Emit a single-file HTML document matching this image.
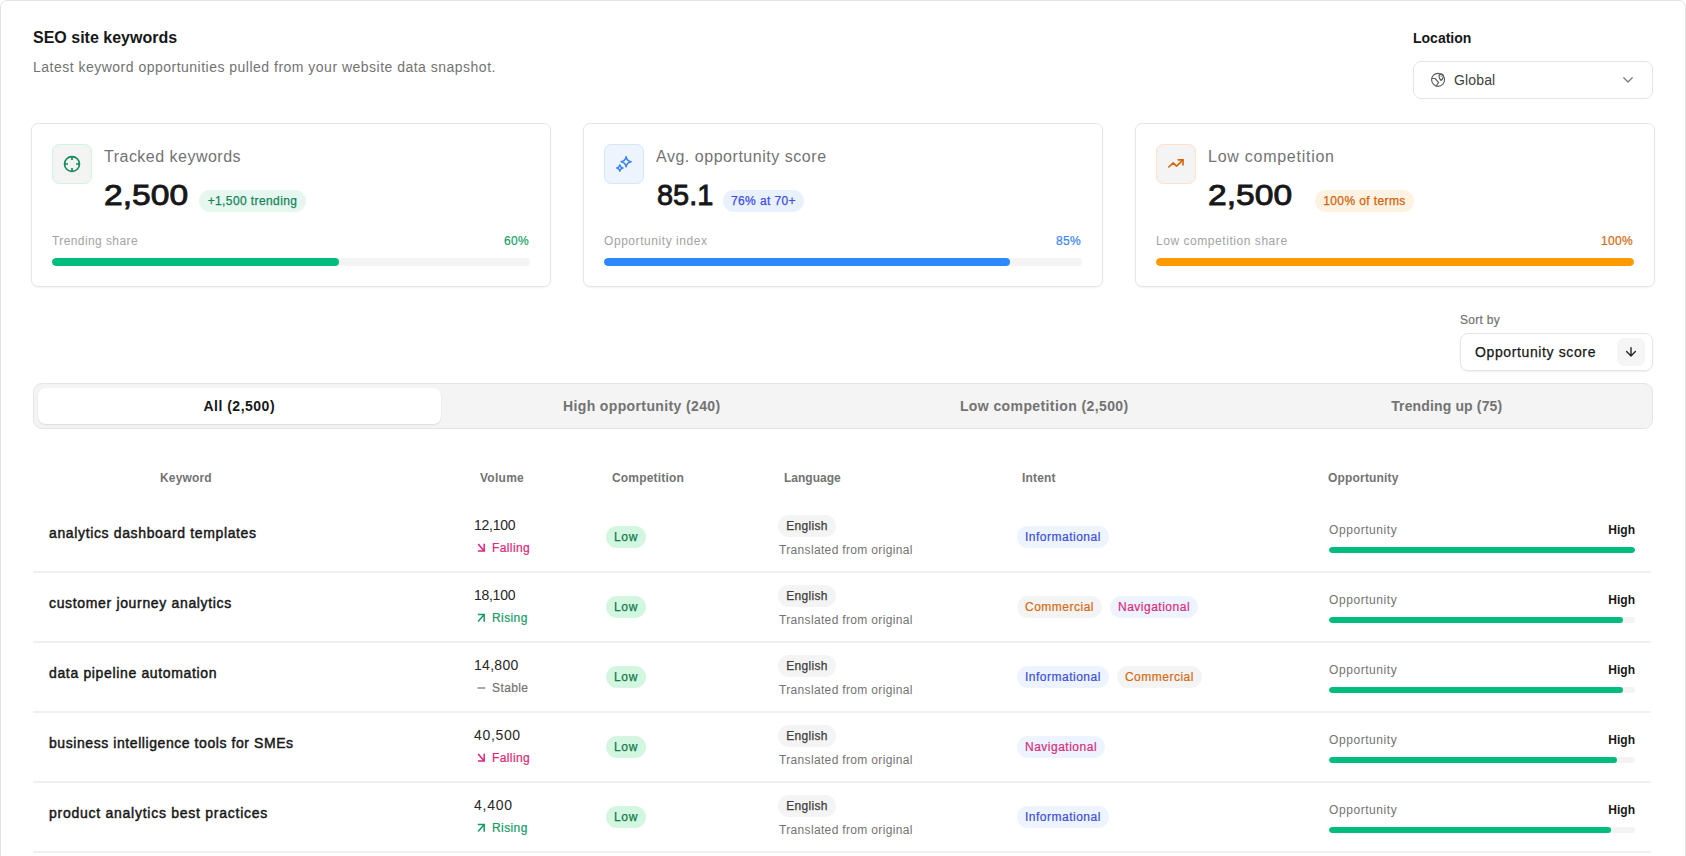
<!DOCTYPE html>
<html><head><meta charset="utf-8"><style>
*{box-sizing:border-box;margin:0;padding:0}
html,body{width:1686px;height:856px;overflow:hidden;background:#fff}
body{font-family:"Liberation Sans",sans-serif;color:#171717;position:relative}
.abs{position:absolute;white-space:nowrap}
.overlay{position:absolute;left:0;top:0;pointer-events:none}
.frame{position:absolute;left:0;top:0;width:1686px;height:900px;border:1px solid #e3e3e3;border-radius:7px}
.title{left:33px;top:28px;font-size:16px;font-weight:700;color:#171717;line-height:20px}
.sub{left:33px;top:58px;font-size:14px;color:#737373;line-height:18px;letter-spacing:.49px}
.loclabel{left:1413px;top:29px;font-size:14px;font-weight:700;line-height:18px}
.select{position:absolute;left:1413px;top:61px;width:240px;height:38px;border:1px solid #e5e5e5;border-radius:8px}
.seltxt{left:40px;top:9px;font-size:14px;line-height:18px;color:#404040;letter-spacing:.15px}
.card{position:absolute;top:123px;width:520px;height:164px;border:1px solid #e5e5e5;border-radius:7px;box-shadow:0 1px 2px rgba(0,0,0,.05)}
.ibox{position:absolute;left:20px;top:20px;width:40px;height:40px;border-radius:7px;border:1px solid}
.clabel{position:absolute;left:72px;top:23px;font-size:16px;color:#737373;line-height:20px;white-space:nowrap}
.cnum{position:absolute;left:72px;top:53px;transform-origin:0 0;font-size:30px;font-weight:400;-webkit-text-stroke:.9px #171717;color:#171717;line-height:36px;white-space:nowrap}
.cbadge{position:absolute;top:66px;height:22px;border-radius:11px;font-size:12px;line-height:22px;text-align:center;white-space:nowrap;letter-spacing:.4px;-webkit-text-stroke:.25px currentColor}
.plabel{position:absolute;left:20px;top:110px;font-size:12px;color:#a3a3a3;line-height:14px;white-space:nowrap}
.pval{position:absolute;right:21px;top:110px;font-size:12px;line-height:14px;letter-spacing:.3px;-webkit-text-stroke:.2px currentColor}
.track{position:absolute;left:20px;top:134px;width:478px;height:8px;border-radius:4px;background:#f4f4f4;overflow:hidden}
.fill{height:8px;border-radius:4px}
.sortlabel{left:1460px;top:313px;font-size:12px;color:#737373;line-height:14px;letter-spacing:.3px;-webkit-text-stroke:.2px currentColor}
.sort{position:absolute;left:1460px;top:333px;width:193px;height:38px;border:1px solid #e5e5e5;border-radius:8px;box-shadow:0 1px 2px rgba(0,0,0,.07)}
.sorttxt{left:14px;top:9px;font-size:14px;line-height:18px;color:#171717;letter-spacing:.62px;-webkit-text-stroke:.25px currentColor}
.sortbtn{position:absolute;left:156px;top:4px;width:28px;height:28px;border-radius:7px;background:#f5f5f5}
.tabs{position:absolute;left:33px;top:383px;width:1620px;height:46px;background:#f4f4f4;border:1px solid #e5e5e5;border-radius:9px}
.tab{position:absolute;top:4px;height:36px;width:402.5px;font-size:14px;line-height:36px;text-align:center;color:#737373;font-weight:700;white-space:nowrap}
.tab.active{background:#fff;border-radius:8px;color:#171717;box-shadow:0 1px 2px rgba(0,0,0,.1)}
.th{position:absolute;top:471px;font-size:12px;font-weight:700;color:#737373;line-height:14px;white-space:nowrap}
.row{position:absolute;left:33px;width:1618px;height:70px;border-bottom:1px solid #f0f0f0;box-shadow:0 1px 0 #f0f0f0}
.kw{position:absolute;left:16px;top:22px;font-size:14px;font-weight:400;-webkit-text-stroke:.45px #171717;color:#171717;line-height:18px;white-space:nowrap}
.vol{position:absolute;left:441px;top:14px;font-size:14px;color:#262626;line-height:18px;letter-spacing:-.2px}
.trend{position:absolute;left:459px;top:39px;font-size:12px;line-height:14px;white-space:nowrap;letter-spacing:.4px;-webkit-text-stroke:.2px currentColor}
.low{position:absolute;left:573px;top:24px;height:22px;width:40px;border-radius:11px;background:#d3f6e0;color:#0f7a4b;-webkit-text-stroke:.25px currentColor;font-size:12px;line-height:22px;text-align:center;letter-spacing:.6px}
.lang{position:absolute;left:745px;top:13px;height:22px;width:58px;border-radius:11px;background:#f4f4f4;color:#404040;font-size:12px;line-height:22px;text-align:center;letter-spacing:.3px;-webkit-text-stroke:.25px currentColor}
.trans{position:absolute;left:746px;top:41px;font-size:12px;color:#737373;line-height:14px;white-space:nowrap;letter-spacing:.34px}
.intent{position:absolute;left:984px;top:24px;height:22px;display:flex;gap:8px}
.ib{height:22px;border-radius:11px;font-size:12px;line-height:22px;padding:0 8px;white-space:nowrap;letter-spacing:.5px;-webkit-text-stroke:.2px currentColor}
.ib.inf{background:#edf3ff;color:#3b4fd8}
.ib.com{background:#f4f4f4;color:#d56a12}
.ib.nav{background:#edf3ff;color:#d92c7c}
.opl{position:absolute;left:1296px;top:21px;font-size:12px;color:#737373;line-height:14px;letter-spacing:.57px}
.oph{position:absolute;right:16px;top:21px;font-size:12px;font-weight:700;color:#171717;line-height:14px}
.optrack{position:absolute;left:1296px;top:45px;width:306px;height:6px;border-radius:3px;background:#f3f3f3;overflow:hidden}
.optrack div{height:6px;border-radius:3px;background:#00bc7d}

</style></head><body>
<div class="frame"></div>
<div class="abs title">SEO site keywords</div>
<div class="abs sub">Latest keyword opportunities pulled from your website data snapshot.</div>
<div class="abs loclabel">Location</div>
<div class="select"><div class="abs seltxt">Global</div></div>
<div class="card" style="left:31px"><div class="ibox" style="background:#f4f4f4;border-color:#d0f5df"></div><div class="clabel" style="letter-spacing:0.49px">Tracked keywords</div><div class="cnum" style="transform:scaleX(1.12);left:72px">2,500</div><div class="cbadge" style="left:167px;width:107px;background:#e6f7ef;color:#15845a">+1,500 trending</div><div class="plabel" style="letter-spacing:0.41px">Trending share</div><div class="pval" style="color:#17a068">60%</div><div class="track"><div class="fill" style="width:287px;background:#00bc7d"></div></div></div>
<div class="card" style="left:583px"><div class="ibox" style="background:#eef4fe;border-color:#d5e5fc"></div><div class="clabel" style="letter-spacing:0.53px">Avg. opportunity score</div><div class="cnum" style="transform:scaleX(0.965);left:73px">85.1</div><div class="cbadge" style="left:139px;width:81px;background:#eaf1fe;color:#3d4fdf">76% at 70+</div><div class="plabel" style="letter-spacing:0.56px">Opportunity index</div><div class="pval" style="color:#3a84f2">85%</div><div class="track"><div class="fill" style="width:406px;background:#2d88fa"></div></div></div>
<div class="card" style="left:1135px"><div class="ibox" style="background:#f4f4f4;border-color:#fde3c6"></div><div class="clabel" style="letter-spacing:0.74px">Low competition</div><div class="cnum" style="transform:scaleX(1.12);left:72px">2,500</div><div class="cbadge" style="left:179px;width:99px;background:#fef2e2;color:#d0640c">100% of terms</div><div class="plabel" style="letter-spacing:0.55px">Low competition share</div><div class="pval" style="color:#d3680c">100%</div><div class="track"><div class="fill" style="width:478px;background:#fe9a00"></div></div></div>
<div class="abs sortlabel">Sort by</div>
<div class="sort"><div class="abs sorttxt">Opportunity score</div><div class="sortbtn"></div></div>
<div class="tabs"><div class="tab active" style="left:4px;letter-spacing:.5px">All (2,500)</div><div class="tab" style="left:406.5px;letter-spacing:.37px">High opportunity (240)</div><div class="tab" style="left:809px;letter-spacing:.4px">Low competition (2,500)</div><div class="tab" style="left:1211.5px;letter-spacing:.14px">Trending up (75)</div></div>
<div class="th" style="left:160px;letter-spacing:0.17px">Keyword</div>
<div class="th" style="left:480px;letter-spacing:0.26px">Volume</div>
<div class="th" style="left:612px;letter-spacing:0.18px">Competition</div>
<div class="th" style="left:784px;letter-spacing:0px">Language</div>
<div class="th" style="left:1022px;letter-spacing:0.16px">Intent</div>
<div class="th" style="left:1328px;letter-spacing:0.18px">Opportunity</div>
<div class="row" style="top:502px"><div class="kw" style="letter-spacing:0.64px">analytics dashboard templates</div><div class="vol" style="letter-spacing:-0.24px">12,100</div><div class="trend" style="color:#e0267a">Falling</div><div class="low">Low</div><div class="lang">English</div><div class="trans">Translated from original</div><div class="intent"><div class="ib inf">Informational</div></div><div class="opl">Opportunity</div><div class="oph">High</div><div class="optrack"><div style="width:306px"></div></div></div>
<div class="row" style="top:572px"><div class="kw" style="letter-spacing:0.66px">customer journey analytics</div><div class="vol" style="letter-spacing:-0.28px">18,100</div><div class="trend" style="color:#179a63">Rising</div><div class="low">Low</div><div class="lang">English</div><div class="trans">Translated from original</div><div class="intent"><div class="ib com">Commercial</div><div class="ib nav">Navigational</div></div><div class="opl">Opportunity</div><div class="oph">High</div><div class="optrack"><div style="width:294px"></div></div></div>
<div class="row" style="top:642px"><div class="kw" style="letter-spacing:0.65px">data pipeline automation</div><div class="vol" style="letter-spacing:0.3px">14,800</div><div class="trend" style="color:#737373">Stable</div><div class="low">Low</div><div class="lang">English</div><div class="trans">Translated from original</div><div class="intent"><div class="ib inf">Informational</div><div class="ib com">Commercial</div></div><div class="opl">Opportunity</div><div class="oph">High</div><div class="optrack"><div style="width:294px"></div></div></div>
<div class="row" style="top:712px"><div class="kw" style="letter-spacing:0.57px">business intelligence tools for SMEs</div><div class="vol" style="letter-spacing:0.66px">40,500</div><div class="trend" style="color:#e0267a">Falling</div><div class="low">Low</div><div class="lang">English</div><div class="trans">Translated from original</div><div class="intent"><div class="ib nav">Navigational</div></div><div class="opl">Opportunity</div><div class="oph">High</div><div class="optrack"><div style="width:288px"></div></div></div>
<div class="row" style="top:782px"><div class="kw" style="letter-spacing:0.74px">product analytics best practices</div><div class="vol" style="letter-spacing:0.78px">4,400</div><div class="trend" style="color:#179a63">Rising</div><div class="low">Low</div><div class="lang">English</div><div class="trans">Translated from original</div><div class="intent"><div class="ib inf">Informational</div></div><div class="opl">Opportunity</div><div class="oph">High</div><div class="optrack"><div style="width:282px"></div></div></div>
<svg class="overlay" width="1686" height="856" viewBox="0 0 1686 856"><g fill="none" stroke="#5e5e5e" stroke-width="1.15" stroke-linecap="round" stroke-linejoin="round"><circle cx="1438.1" cy="79.8" r="6.5"/><path d="M1441.2,80.5 C1439.8,79.1 1439,78 1439,76.3 A2.2,2.2 0 0 1 1443.4,76.3 C1443.4,78 1442.6,79.1 1441.2,80.5Z"/><path d="M1431.8,78.5 H1435 L1438.6,82.4 L1436.8,85 L1436.1,86.2"/></g><circle cx="1441.2" cy="76.2" r=".6" fill="#5e5e5e"/><path d="M1623.8,77.8 L1628,82 L1632.2,77.8" fill="none" stroke="#7a7a7a" stroke-width="1.3" stroke-linecap="round" stroke-linejoin="round"/><g fill="none" stroke="#168a5b" stroke-width="1.7" stroke-linecap="butt"><circle cx="72" cy="164" r="7.45"/><path d="M72,156.5 V160 M72,168 V171.5 M64.5,164 H68 M76,164 H79.5"/></g><g fill="none" stroke="#3b82f6" stroke-width="1.45" stroke-linejoin="round"><path d="M626.10,156.60 Q626.81,160.99 631.20,161.70 Q626.81,162.41 626.10,166.80 Q625.39,162.41 621.00,161.70 Q625.39,160.99 626.10,156.60Z"/><path d="M619.80,164.85 Q620.30,167.50 622.95,168.00 Q620.30,168.50 619.80,171.15 Q619.30,168.50 616.65,168.00 Q619.30,167.50 619.80,164.85Z"/></g><g fill="none" stroke="#d3650b" stroke-width="1.65" stroke-linecap="round" stroke-linejoin="round"><path d="M1168.8,167 L1173.2,162.9 L1176.5,166.2 L1183,159.9"/><path d="M1178.3,159.9 H1183 V164.9"/></g><path d="M1631,347.6 V356 M1626.6,351.6 L1631,356 L1635.4,351.6" fill="none" stroke="#262626" stroke-width="1.4" stroke-linecap="round" stroke-linejoin="round"/><path d="M478.6,544.6 L484.2,550.9 M478.6,550.9 H484.2 V544.6" fill="none" stroke="#e0267a" stroke-width="1.5" stroke-linecap="square"/><path d="M478.6,620.9 L484.2,614.6 M478.6,614.6 H484.2 V620.9" fill="none" stroke="#179a63" stroke-width="1.5" stroke-linecap="square"/><path d="M477.5,688 H485.2" fill="none" stroke="#8c8c8c" stroke-width="1.5"/><path d="M478.6,754.6 L484.2,760.9 M478.6,760.9 H484.2 V754.6" fill="none" stroke="#e0267a" stroke-width="1.5" stroke-linecap="square"/><path d="M478.6,830.9 L484.2,824.6 M478.6,824.6 H484.2 V830.9" fill="none" stroke="#179a63" stroke-width="1.5" stroke-linecap="square"/></svg>
</body></html>
